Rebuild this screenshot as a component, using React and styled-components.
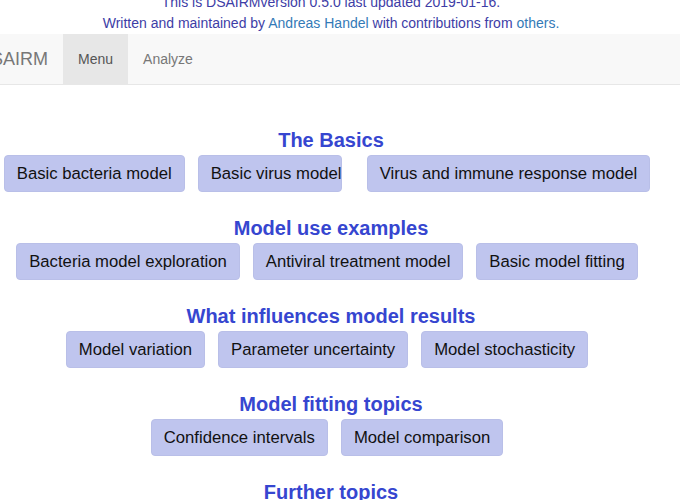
import React from "react";
import styled, { createGlobalStyle } from "styled-components";

const Global = createGlobalStyle`
  html, body { margin: 0; padding: 0; background: #fff; overflow: hidden; }
  body { font-family: "Liberation Sans", Arial, Helvetica, sans-serif; font-size: 14px; color: #333; }
`;

const Page = styled.div`
  width: 736px;
  margin: -8px 0 0 -37px;
`;

const Info = styled.div`
  text-align: center;
  color: #3d3da6;
  line-height: 20px;
  margin-bottom: 1px;
`;

const Link = styled.a`
  color: #337ab7;
  text-decoration: none;
`;

const Navbar = styled.nav`
  display: flex;
  align-items: stretch;
  height: 50px;
  background: #f8f8f8;
  border-bottom: 1px solid #e7e7e7;
`;

const Brand = styled.span`
  padding: 15px;
  font-size: 18px;
  line-height: 20px;
  color: #777;
`;

const NavItem = styled.span`
  padding: 15px;
  line-height: 20px;
  color: ${(p) => (p.$active ? "#555" : "#777")};
  background: ${(p) => (p.$active ? "#e7e7e7" : "transparent")};
`;

const Content = styled.main`
  padding-top: 44px;
`;

const Section = styled.section`
  display: flex;
  flex-direction: column;
  align-items: center;
  margin-bottom: 25px;
`;

const Heading = styled.h3`
  margin: 0 0 4px;
  font-size: 20px;
  line-height: 22px;
  font-weight: bold;
  color: #3646d0;
`;

const Row = styled.div`
  display: flex;
  gap: 13px;
  padding-right: 8px;
`;

const Button = styled.button`
  font-family: inherit;
  font-size: 16.7px;
  line-height: 23px;
  padding: 6px 12px;
  height: 37px;
  color: #111;
  background: #bfc5ee;
  border: 1px solid #b9bfe8;
  border-radius: 4px;
  white-space: nowrap;
  overflow: visible;
  text-align: left;
  width: ${(p) => (p.$w ? `${p.$w}px` : "auto")};
  margin-right: ${(p) => (p.$extra ? `${p.$extra}px` : "0")};
`;

const sections = [
  {
    title: "The Basics",
    items: [
      { label: "Basic bacteria model" },
      { label: "Basic virus model", w: 144, extra: 12 },
      { label: "Virus and immune response model" },
    ],
  },
  {
    title: "Model use examples",
    items: [
      { label: "Bacteria model exploration" },
      { label: "Antiviral treatment model" },
      { label: "Basic model fitting" },
    ],
  },
  {
    title: "What influences model results",
    items: [
      { label: "Model variation" },
      { label: "Parameter uncertainty" },
      { label: "Model stochasticity" },
    ],
  },
  {
    title: "Model fitting topics",
    items: [{ label: "Confidence intervals" }, { label: "Model comparison" }],
  },
  { title: "Further topics", items: [] },
];

export default function App() {
  return (
    <>
      <Global />
      <Page>
        <Info>This is DSAIRMversion 0.5.0 last updated 2019-01-16.</Info>
        <Info>
          Written and maintained by <Link>Andreas Handel</Link> with contributions from{" "}
          <Link>others.</Link>
        </Info>
        <Navbar>
          <Brand>DSAIRM</Brand>
          <NavItem $active>Menu</NavItem>
          <NavItem>Analyze</NavItem>
        </Navbar>
        <Content>
          {sections.map((s) => (
            <Section key={s.title}>
              <Heading>{s.title}</Heading>
              {s.items.length > 0 && (
                <Row>
                  {s.items.map((it) => (
                    <Button key={it.label} $w={it.w} $extra={it.extra}>
                      {it.label}
                    </Button>
                  ))}
                </Row>
              )}
            </Section>
          ))}
        </Content>
      </Page>
    </>
  );
}
